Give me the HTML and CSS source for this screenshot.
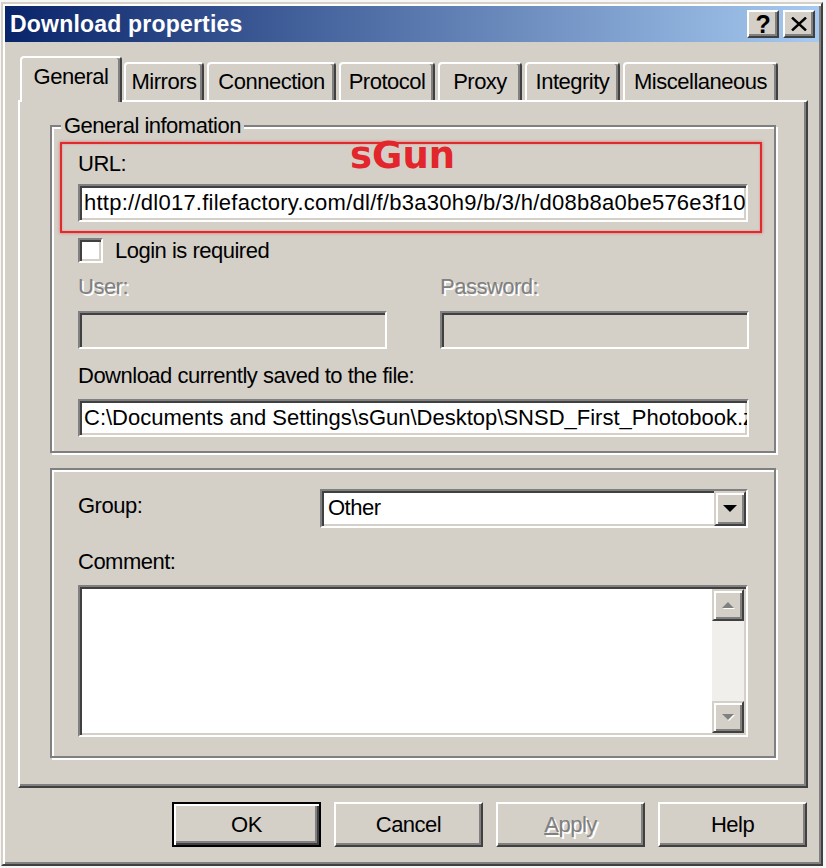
FILE: index.html
```html
<!DOCTYPE html>
<html lang="en">
<head>
    <meta charset="UTF-8">
    <meta name="viewport" content="width=device-width, initial-scale=1.0">
    <title>Download properties</title>
<link rel="stylesheet" href="styles.css">
</head>
<body>
    <div class="window">
        <div class="title_bar">
            <span class="title_text">Download properties</span>
            <div class="title_btns">
                <button class="title_btn">?</button>
                <button class="title_btn">
                    <svg width="16" height="14" viewBox="0 0 16 14"><path d="M1 0.5 L15 13.5 M15 0.5 L1 13.5" stroke="#000" stroke-width="2.4" fill="none"/></svg>
                </button>
            </div>
        </div>

        <div class="dlg_body">
            <ul class="tabs">
                <li class="tab tab_active tab_general">General</li>
                <li class="tab tab_mirrors">Mirrors</li>
                <li class="tab tab_connection">Connection</li>
                <li class="tab tab_protocol">Protocol</li>
                <li class="tab tab_proxy">Proxy</li>
                <li class="tab tab_integrity">Integrity</li>
                <li class="tab tab_misc">Miscellaneous</li>
            </ul>

            <div class="panel">
                <fieldset class="group">
                    <legend>General infomation</legend>
                    <div class="mark_box">
                        <span class="watermark">sGun</span>
                        <div class="field_label">URL:</div>
                        <div class="text_input input_url">http://dl017.filefactory.com/dl/f/b3a30h9/b/3/h/d08b8a0be576e3f10</div>
                    </div>
                    <div class="group_rows">
                        <div class="check_row">
                            <span class="check_box"></span>
                            <span>Login is required</span>
                        </div>
                        <div class="login_grid">
                            <div>
                                <div class="field_label label_disabled">User:</div>
                                <div class="text_input input_disabled"></div>
                            </div>
                            <div>
                                <div class="field_label label_disabled">Password:</div>
                                <div class="text_input input_disabled"></div>
                            </div>
                        </div>
                        <div class="field_label label_file">Download currently saved to the file:</div>
                        <div class="text_input input_file">C:\Documents and Settings\sGun\Desktop\SNSD_First_Photobook.zip</div>
                    </div>
                </fieldset>

                <div class="group group_extra">
                    <div class="select_row">
                        <span class="field_label select_label">Group:</span>
                        <div class="combo">
                            <span class="combo_text">Other</span>
                            <span class="combo_btn">
                                <svg width="14" height="8" viewBox="0 0 14 8"><path d="M0 0 H14 L7 7 Z" fill="#000"/></svg>
                            </span>
                        </div>
                    </div>
                    <div class="field_label label_comment">Comment:</div>
                    <div class="memo">
                        <div class="memo_text"></div>
                        <div class="scroll_bar">
                            <span class="scroll_btn">
                                <svg width="14" height="9" viewBox="0 0 14 9"><path d="M2 8 H14 L8 2 Z" fill="#fff"/><path d="M1 7 H13 L7 1 Z" fill="#808080"/></svg>
                            </span>
                            <span class="scroll_track"></span>
                            <span class="scroll_btn">
                                <svg width="14" height="9" viewBox="0 0 14 9"><path d="M2 2 H14 L8 8 Z" fill="#fff"/><path d="M1 1 H13 L7 7 Z" fill="#808080"/></svg>
                            </span>
                        </div>
                    </div>
                </div>
            </div>

            <div class="btn_row">
                <button class="push_btn btn_default">OK</button>
                <button class="push_btn">Cancel</button>
                <button class="push_btn btn_disabled"><u>A</u>pply</button>
                <button class="push_btn">Help</button>
            </div>
        </div>
    </div>
</body>
</html>
```

FILE: styles.css
```css
*{
    margin:0;
    box-sizing: border-box;
}
body{
    background-color: #f6f6f6;
    font-family: "Liberation Sans", Arial, sans-serif;
    font-size: 22px;
    letter-spacing: -0.5px;
    color: #000;
}
button{
    font-family: inherit;
    font-size: inherit;
    letter-spacing: inherit;
    color: inherit;
    padding: 0;
}
.window{
    width: 822px;
    height: 864px;
    margin: 2px 0 0 1px;
    padding: 2px;
    background-color: #d4d0c8;
    border: 2px solid;
    border-color: #d4d0c8 #404040 #404040 #d4d0c8;
    box-shadow: inset 2px 2px #fff, inset -2px -2px #808080;
}
.title_bar{
    display: flex;
    justify-content: space-between;
    align-items: center;
    height: 36px;
    padding: 0 4px 0 5px;
    background: linear-gradient(to right, #0a246a, #a6caf0);
}
.title_text{
    color: #fff;
    font-weight: bold;
    font-size: 23px;
    letter-spacing: 0.2px;
}
.title_btns{
    display: flex;
    gap: 4px;
}
.title_btn{
    display: flex;
    justify-content: center;
    align-items: center;
    width: 32px;
    height: 28px;
    background-color: #d4d0c8;
    border: 2px solid;
    border-color: #fff #404040 #404040 #fff;
    box-shadow: inset -2px -2px #808080;
    font-weight: bold;
    font-size: 25px;
}
.dlg_body{
    padding: 14px 11px 0 13px;
}
.tabs{
    display: flex;
    align-items: flex-end;
    height: 44px;
    list-style: none;
    padding: 0 0 0 2px;
}
.tab{
    display: flex;
    justify-content: center;
    align-items: center;
    height: 38px;
    margin-left: 3px;
    border: 2px solid;
    border-bottom: none;
    border-color: #fff #404040 #fff #fff;
    border-radius: 4px 4px 0 0;
    box-shadow: inset -2px 0 #808080;
}
.tab_active{
    position: relative;
    z-index: 1;
    height: 46px;
    margin: 0 0 -2px 0;
    padding-bottom: 6px;
    background-color: #d4d0c8;
}
.tab_general{ width: 102px; }
.tab_mirrors{ width: 80px; margin-left: 2px; }
.tab_connection{ width: 129px; }
.tab_protocol{ width: 96px; }
.tab_proxy{ width: 84px; }
.tab_integrity{ width: 95px; }
.tab_misc{ width: 155px; }

.panel{
    height: 688px;
    padding: 11px 30px 0 30px;
    border: 2px solid;
    border-color: #fff #404040 #404040 #fff;
    box-shadow: inset -2px -2px #808080;
}
.group{
    min-width: 0;
    border: 2px solid #808080;
    box-shadow: 2px 2px 0 #fff, inset 2px 2px 0 #fff;
}
fieldset.group{
    padding: 3px 12px 14px 8px;
}
.group legend{
    margin-left: 1px;
    padding: 0 3px;
    line-height: 26px;
    background-color: #d4d0c8;
}
.mark_box{
    position: relative;
    padding: 7px 12px 9px 16px;
    border: 2px solid #df2a2e;
    box-shadow: 0 0 3px rgba(230, 60, 60, 0.7), inset 0 0 2px rgba(230, 60, 60, 0.5);
}
.watermark{
    position: absolute;
    top: -7px;
    left: 288px;
    font-family: "DejaVu Sans", sans-serif;
    font-weight: bold;
    font-size: 37px;
    line-height: 1;
    letter-spacing: 0;
    color: #e3262b;
}
.field_label{
    line-height: 26px;
    white-space: nowrap;
}
.label_disabled{
    color: #808080;
    text-shadow: 2px 2px 0 #fff;
}
.text_input{
    height: 38px;
    margin-top: 7px;
    padding: 0 4px;
    line-height: 34px;
    white-space: nowrap;
    overflow: hidden;
    background-color: #fff;
    border: 2px solid;
    border-color: #808080 #fff #fff #808080;
    box-shadow: inset 2px 2px #404040, inset -2px -2px #d4d0c8;
}
.input_url{
    letter-spacing: 0.25px;
}
.input_disabled{
    margin-top: 11px;
    background-color: #d4d0c8;
}
.group_rows{
    padding: 0 13px 0 18px;
}
.check_row{
    display: flex;
    align-items: center;
    gap: 12px;
    height: 25px;
    margin-top: 5px;
    line-height: 26px;
}
.check_box{
    width: 25px;
    height: 25px;
    background-color: #fff;
    border: 2px solid;
    border-color: #808080 #fff #fff #808080;
    box-shadow: inset 2px 2px #404040, inset -2px -2px #d4d0c8;
}
.login_grid{
    display: grid;
    grid-template-columns: 309px 309px;
    column-gap: 53px;
    margin-top: 11px;
}
.label_file{
    margin-top: 14px;
}
.input_file{
    margin-top: 10px;
    letter-spacing: 0;
}
.group_extra{
    margin-top: 15px;
    padding: 19px 26px 19px 26px;
}
.select_row{
    display: flex;
    align-items: flex-start;
}
.select_label{
    width: 242px;
    padding-top: 4px;
}
.combo{
    flex: 1;
    display: flex;
    justify-content: space-between;
    height: 39px;
    background-color: #fff;
    border: 2px solid;
    border-color: #808080 #fff #fff #808080;
    box-shadow: inset 2px 2px #404040, inset -2px -2px #d4d0c8;
}
.combo_text{
    padding: 4px 0 0 6px;
    line-height: 26px;
}
.combo_btn{
    display: flex;
    justify-content: center;
    align-items: center;
    width: 32px;
    height: 35px;
    background-color: #d4d0c8;
    border: 2px solid;
    border-color: #d4d0c8 #404040 #404040 #d4d0c8;
    box-shadow: inset 2px 2px #fff, inset -2px -2px #808080;
}
.label_comment{
    margin-top: 21px;
}
.memo{
    display: flex;
    height: 152px;
    margin-top: 10px;
    background-color: #fff;
    border: 2px solid;
    border-color: #808080 #fff #fff #808080;
    box-shadow: inset 2px 2px #404040, inset -2px -2px #d4d0c8;
}
.memo_text{
    flex: 1;
}
.scroll_bar{
    display: flex;
    flex-direction: column;
    width: 32px;
    margin: 2px 2px 2px 0;
}
.scroll_btn{
    display: flex;
    justify-content: center;
    align-items: center;
    height: 32px;
    background-color: #d4d0c8;
    border: 2px solid;
    border-color: #d4d0c8 #404040 #404040 #d4d0c8;
    box-shadow: inset 2px 2px #fff, inset -2px -2px #808080;
}
.scroll_track{
    flex: 1;
    background-color: #f0efec;
}
.btn_row{
    display: flex;
    justify-content: flex-end;
    gap: 13px;
    margin-top: 14px;
    padding-right: 1px;
}
.push_btn{
    width: 149px;
    height: 45px;
    background-color: #d4d0c8;
    border: 2px solid;
    border-color: #fff #404040 #404040 #fff;
    box-shadow: inset -2px -2px #808080;
}
.btn_default{
    border-color: #000;
    box-shadow: inset 2px 2px #fff, inset -2px -2px #404040, inset -4px -4px #808080;
}
.btn_disabled{
    color: #808080;
    text-shadow: 2px 2px 0 #fff;
}
.btn_disabled u{
    text-decoration-thickness: 2px;
}
```
